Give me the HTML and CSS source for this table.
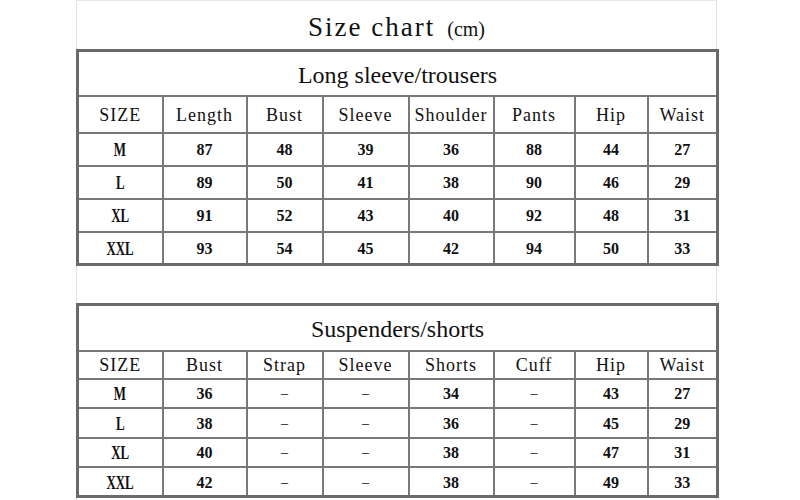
FILE: index.html
```html
<!DOCTYPE html>
<html>
<head>
<meta charset="utf-8">
<link rel="stylesheet" href="styles.css">
</head>
<body>
<div class="sheet">
  <div class="title"><span class="big">Size chart</span><span class="unit">(cm)</span></div>
  <table class="chart chart-a">
    <colgroup>
      <col class="c1"><col class="c2"><col class="c3"><col class="c4"><col class="c5"><col class="c6"><col class="c7"><col class="c8">
    </colgroup>
    <tr class="cap"><td colspan="8">Long sleeve/trousers</td></tr>
    <tr class="head"><td>SIZE</td><td>Length</td><td>Bust</td><td>Sleeve</td><td>Shoulder</td><td>Pants</td><td>Hip</td><td>Waist</td></tr>
    <tr class="row"><td><span class="sz">M</span></td><td>87</td><td>48</td><td>39</td><td>36</td><td>88</td><td>44</td><td>27</td></tr>
    <tr class="row"><td><span class="sz">L</span></td><td>89</td><td>50</td><td>41</td><td>38</td><td>90</td><td>46</td><td>29</td></tr>
    <tr class="row"><td><span class="sz">XL</span></td><td>91</td><td>52</td><td>43</td><td>40</td><td>92</td><td>48</td><td>31</td></tr>
    <tr class="row"><td><span class="sz">XXL</span></td><td>93</td><td>54</td><td>45</td><td>42</td><td>94</td><td>50</td><td>33</td></tr>
  </table>
  <div class="gap"></div>
  <table class="chart chart-b">
    <colgroup>
      <col class="c1"><col class="c2"><col class="c3"><col class="c4"><col class="c5"><col class="c6"><col class="c7"><col class="c8">
    </colgroup>
    <tr class="cap"><td colspan="8">Suspenders/shorts</td></tr>
    <tr class="head"><td>SIZE</td><td>Bust</td><td>Strap</td><td>Sleeve</td><td>Shorts</td><td>Cuff</td><td>Hip</td><td>Waist</td></tr>
    <tr class="row"><td><span class="sz">M</span></td><td>36</td><td class="dash">–</td><td class="dash">–</td><td>34</td><td class="dash">–</td><td>43</td><td>27</td></tr>
    <tr class="row"><td><span class="sz">L</span></td><td>38</td><td class="dash">–</td><td class="dash">–</td><td>36</td><td class="dash">–</td><td>45</td><td>29</td></tr>
    <tr class="row"><td><span class="sz">XL</span></td><td>40</td><td class="dash">–</td><td class="dash">–</td><td>38</td><td class="dash">–</td><td>47</td><td>31</td></tr>
    <tr class="row"><td><span class="sz">XXL</span></td><td>42</td><td class="dash">–</td><td class="dash">–</td><td>38</td><td class="dash">–</td><td>49</td><td>33</td></tr>
  </table>
</div>
</body>
</html>
```

FILE: styles.css
```css
html, body {
  margin: 0;
  padding: 0;
  background: #ffffff;
}
body {
  font-family: "Liberation Serif", "Times New Roman", serif;
  color: #111;
  width: 800px;
  height: 500px;
  overflow: hidden;
}
.sheet {
  margin-left: 76px;
  width: 641px;
  height: 500px;
  box-sizing: border-box;
  border-top: 1px solid #e8e8e8;
  border-left: 1px solid #e2e2e2;
  border-right: 1px solid #e2e2e2;
}
.title {
  height: 48px;
  display: flex;
  align-items: center;
  justify-content: center;
  padding-top: 5px;
  box-sizing: border-box;
  gap: 12px;
}
.big {
  font-size: 27px;
  letter-spacing: 2px;
}
.unit {
  font-size: 20px;
  padding-top: 3px;
}
.chart {
  border-collapse: collapse;
  table-layout: fixed;
  width: 640px;
  margin-left: -1px;
  border: 3px solid #6a6a6a;
}
.chart td {
  border: 2px solid #787878;
  text-align: center;
  vertical-align: middle;
  padding: 2px 0 0;
}
.c1 { width: 85px; }
.c2 { width: 84px; }
.c3 { width: 76px; }
.c4 { width: 86px; }
.c5 { width: 85px; }
.c6 { width: 81px; }
.c7 { width: 73px; }
.c8 { width: 70px; }
.cap td {
  font-size: 24px;
  padding-top: 4px;
}
.head td {
  font-size: 18px;
  letter-spacing: 1px;
}
.row td {
  font-size: 16px;
  font-weight: bold;
}
.sz {
  display: inline-block;
  font-size: 19px;
  transform: scaleX(0.68);
}
.row td.dash {
  font-weight: normal;
  font-size: 14px;
}
.chart-a .cap { height: 45px; }
.chart-a .head { height: 37px; }
.chart-a .row { height: 33px; }
.gap { height: 37px; }
.chart-b .cap { height: 46px; }
.chart-b .head { height: 28px; }
.chart-b .row { height: 29.5px; }
```
